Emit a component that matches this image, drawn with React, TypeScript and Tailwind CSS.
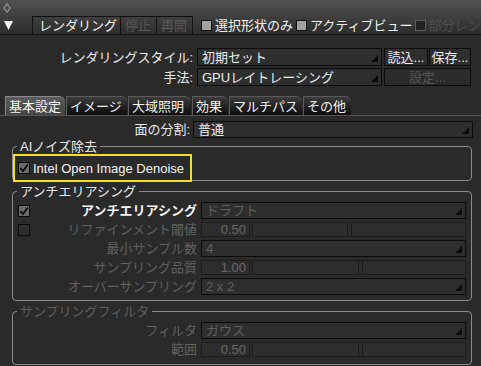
import React from 'react';

// --- Small drawing helpers ---
function Arrow() {
  return (
    <svg width="7" height="7" viewBox="0 0 7 7" className="absolute bottom-[3px] right-[3px]">
      <polygon points="7,0 7,7 0,7" fill="#0b0b0b" />
    </svg>
  );
}

function Check({ checked = false }: { checked?: boolean }) {
  return (
    <div
      className={`flex h-[12px] w-[12px] shrink-0 items-center justify-center border border-[#0a0a0a] ${
        checked ? 'bg-[#6b6b6b]' : 'bg-[#2f2f2f]'
      }`}
    >
      {checked && (
        <svg width="10" height="10" viewBox="0 0 10 10">
          <path d="M1.5 5.2 L4 8 L8.8 1.5" fill="none" stroke="#0a0a0a" strokeWidth="1.8" />
        </svg>
      )}
    </div>
  );
}

function Select({ value, disabled = false }: { value: string; disabled?: boolean }) {
  return (
    <div
      className={`relative flex h-full items-center border border-[#0c0c0c] bg-[#2e2e2e] pl-[4px] ${
        disabled ? 'text-[#606060]' : 'text-[#ececec]'
      }`}
    >
      {value}
      <Arrow />
    </div>
  );
}

function NumberSlider({ value, thumb }: { value: string; thumb: string }) {
  return (
    <div className="flex h-full items-center">
      <div className="flex h-[15px] w-[49px] items-center justify-end border border-[#1d1d1d] bg-[#2d2d2d] pr-[3px] text-[#686868]">
        {value}
      </div>
      <div className="relative ml-[2px] h-[15px] flex-1 border border-[#1d1d1d] bg-[#2d2d2d]">
        <div className={`absolute top-0 bottom-0 w-[5px] border-x border-[#1b1b1b] ${thumb}`} />
      </div>
    </div>
  );
}

function Row({
  check,
  label,
  strong = false,
  children,
}: {
  check?: React.ReactNode;
  label: string;
  strong?: boolean;
  children: React.ReactNode;
}) {
  return (
    <div className="flex h-[17px] items-center">
      <div className="flex w-[184px] items-center">
        <div className="ml-[5px] w-[12px]">{check}</div>
        <div className={`flex-1 text-right ${strong ? 'font-bold text-[#f2f2f2]' : 'text-[#606060]'}`}>{label}</div>
      </div>
      <div className="ml-[4px] h-full w-[265px]">{children}</div>
    </div>
  );
}

const tabs = [
  { label: '基本設定', w: 'w-[60px]', active: true },
  { label: 'イメージ', w: 'w-[61px]' },
  { label: '大域照明', w: 'w-[63px]' },
  { label: '効果', w: 'w-[36px]' },
  { label: 'マルチパス', w: 'w-[73px]' },
  { label: 'その他', w: 'w-[48px]' },
];

export default function App() {
  return (
    <div className="h-[366px] w-[481px] overflow-hidden bg-[#2a2a2a] font-['Liberation_Sans','Noto_Sans_CJK_JP',sans-serif] text-[13px] leading-[15px] text-[#ececec]">
      {/* --- Header bar --- */}
      <div className="h-[35px] border-b border-[#141414] bg-gradient-to-b from-[#515151] to-[#2d2d2d]">
        <div className="h-[16px] pl-[3px] pt-[3px]">
          <svg width="8" height="10" viewBox="0 0 8 10">
            <polygon points="4,0.8 7.2,5 4,9.2 0.8,5" fill="none" stroke="#8a8a8a" strokeWidth="1.4" />
          </svg>
        </div>
        <div className="flex h-[18px] items-center overflow-hidden whitespace-nowrap">
          <svg width="9" height="9" viewBox="0 0 9 9" className="ml-[4px] shrink-0">
            <polygon points="0,0 9,0 4.5,9" fill="#f4f4f4" />
          </svg>
          <div className="ml-[19px] flex h-full w-[89px] shrink-0 items-center border-x border-t border-[#101010] pl-[6px] text-[#f0f0f0]">
            レンダリング
          </div>
          <div className="flex h-full w-[36px] shrink-0 items-center border-r border-t border-[#101010] pl-[4px] text-[#575757]">
            停止
          </div>
          <div className="flex h-full w-[36px] shrink-0 items-center border-r border-t border-[#101010] pl-[4px] text-[#575757]">
            再開
          </div>
          <div className="ml-[8px] h-[11px] w-[11px] shrink-0 border border-[#111] bg-[#a2a2a2]" />
          <span className="ml-[3px] shrink-0 text-[#f0f0f0]">選択形状のみ</span>
          <div className="ml-[3px] h-[11px] w-[11px] shrink-0 border border-[#111] bg-[#a2a2a2]" />
          <span className="ml-[3px] shrink-0 text-[#f0f0f0]">アクティブビュー</span>
          <div className="ml-[2px] h-[11px] w-[11px] shrink-0 border border-[#5a5a5a] bg-[#222]" />
          <span className="ml-[3px] shrink-0 text-[#4e4e4e]">部分レン</span>
        </div>
      </div>

      {/* --- Style / method rows --- */}
      <div className="mt-[13px] flex h-[18px] items-center">
        <div className="w-[193px] text-right">レンダリングスタイル:</div>
        <div className="ml-[4px] h-full w-[185px]">
          <Select value="初期セット" />
        </div>
        <div className="ml-[2px] flex h-full w-[44px] items-center justify-center border border-[#0c0c0c] bg-[#2e2e2e]">
          読込...
        </div>
        <div className="ml-[1px] flex h-full w-[42px] items-center justify-center border border-[#0c0c0c] bg-[#2e2e2e]">
          保存...
        </div>
      </div>
      <div className="mt-[2px] flex h-[18px] items-center">
        <div className="w-[193px] text-right">手法:</div>
        <div className="ml-[4px] h-full w-[185px]">
          <Select value="GPUレイトレーシング" />
        </div>
        <div className="ml-[2px] flex h-full w-[87px] items-center justify-center border border-[#0c0c0c] bg-[#2b2b2b] text-[#555]">
          設定...
        </div>
      </div>

      {/* --- Tabs --- */}
      <div className="mt-[10px] flex h-[20px] items-end gap-[1px] border-b border-[#555] pl-[5px]">
        {tabs.map((t) => (
          <div
            key={t.label}
            className={`flex h-[19px] items-center rounded-tr-[6px] border-l border-t pl-[3px] ${t.w} ${
              t.active
                ? 'border-[#8a8a8a] bg-gradient-to-b from-[#5c5c5c] to-[#444] text-[#f4f4f4]'
                : 'border-[#5a5a5a] bg-gradient-to-b from-[#3c3c3c] to-[#0e0e0e] text-[#f0f0f0]'
            }`}
          >
            {t.label}
          </div>
        ))}
      </div>

      <div className="mt-[5px] flex h-[17px] items-center">
        <div className="w-[190px] text-right">面の分割:</div>
        <div className="ml-[3px] h-full w-[280px]">
          <Select value="普通" />
        </div>
      </div>

      {/* --- AI denoise --- */}
      <fieldset className="ml-[12px] mt-[1px] w-[460px] rounded-[4px] border border-[#8a8a8a]">
        <legend className="ml-[4px] px-[3px] leading-[15px]">AIノイズ除去</legend>
        <div className="relative -mb-[2px] flex h-[28px] w-[179px] items-center border-2 border-[#f2e01c] pl-[3px]">
          <Check checked />
          <span className="ml-[3px] text-[#f4f4f4]">Intel Open Image Denoise</span>
        </div>
      </fieldset>

      {/* --- Anti-aliasing --- */}
      <fieldset className="ml-[12px] mt-[3px] w-[460px] rounded-[4px] border border-[#8a8a8a]">
        <legend className="ml-[4px] px-[3px] leading-[15px]">アンチエリアシング</legend>
        <div className="flex flex-col gap-[2px] pb-[5px] pt-[3px]">
          <Row check={<Check checked />} label="アンチエリアシング" strong>
            <Select value="ドラフト" disabled />
          </Row>
          <Row check={<Check />} label="リファインメント閾値">
            <NumberSlider value="0.50" thumb="left-[94px]" />
          </Row>
          <Row label="最小サンプル数">
            <Select value="4" disabled />
          </Row>
          <Row label="サンプリング品質">
            <NumberSlider value="1.00" thumb="left-[105px]" />
          </Row>
          <Row label="オーバーサンプリング">
            <Select value="2 x 2" disabled />
          </Row>
        </div>
      </fieldset>

      {/* --- Sampling filter --- */}
      <fieldset className="ml-[12px] mt-[3px] w-[460px] rounded-[4px] border border-[#8a8a8a]">
        <legend className="ml-[4px] px-[3px] leading-[15px] text-[#5e5e5e]">サンプリングフィルタ</legend>
        <div className="flex flex-col gap-[2px] pb-[6px] pt-[3px]">
          <Row label="フィルタ">
            <Select value="ガウス" disabled />
          </Row>
          <Row label="範囲">
            <NumberSlider value="0.50" thumb="left-[105px]" />
          </Row>
        </div>
      </fieldset>
    </div>
  );
}
